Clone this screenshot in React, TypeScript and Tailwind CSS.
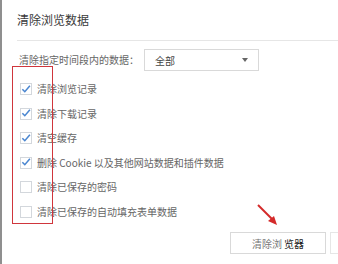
import React from "react";

const items = [
  { label: "清除浏览记录", checked: true },
  { label: "清除下载记录", checked: true },
  { label: "清空缓存", checked: true },
  { label: "删除 Cookie 以及其他网站数据和插件数据", checked: true },
  { label: "清除已保存的密码", checked: false },
  { label: "清除已保存的自动填充表单数据", checked: false },
];

function Box({ checked }: { checked: boolean }) {
  return (
    <div className="w-[12px] h-[12px] border border-[#d3d7dc] bg-white flex items-center justify-center shrink-0">
      {checked && (
        <svg width="11" height="10" viewBox="0 0 11 10" className="-mt-[1px]">
          <path d="M1.5 5.2 L4.2 8 L9.8 1.5" fill="none" stroke="#4a86d0" strokeWidth="1.7" />
        </svg>
      )}
    </div>
  );
}

export default function App() {
  return (
    <div
      className="relative w-[338px] h-[264px] bg-white overflow-hidden border-l-2 border-[#8f8f8f] text-[#666]"
      style={{ fontFamily: '"Noto Sans CJK SC", "Noto Sans", sans-serif' }}
    >
      <div className="pl-[15px] pt-[12px]">
        <p className="text-[12px] leading-[16px] text-[#3a3a3a]">清除浏览数据</p>
        <div className="mt-[12px] border-b border-[#e6e6e6]" />
        <div className="flex items-center mt-[8px] pl-[2px]">
          <span className="text-[10px] leading-[14px] w-[125px]">清除指定时间段内的数据：</span>
          <div className="w-[115px] h-[22px] border border-[#d9d9d9] flex items-center justify-between pl-[10px] pr-[10px]">
            <span className="text-[10px] text-[#444]">全部</span>
            <svg width="6" height="4" viewBox="0 0 6 4">
              <path d="M0 0 H6 L3 4 Z" fill="#666" />
            </svg>
          </div>
        </div>
        <div className="flex flex-col mt-[6px] pl-[3px]">
          {items.map((it) => (
            <div key={it.label} className="h-[24.5px] flex items-center gap-[5px]">
              <Box checked={it.checked} />
              <span className="text-[10px] leading-[14px] whitespace-nowrap">{it.label}</span>
            </div>
          ))}
        </div>
        <div className="flex justify-end gap-[4px] mt-[8px] -mr-[12px]">
          <div className="w-[96px] h-[22px] border border-[#d9d9d9] flex items-center justify-center text-[10px] text-[#777]">
            清除浏<span className="text-[#222] ml-[2px]">览器</span>
          </div>
          <div className="w-[20px] h-[22px] border border-[#e6e6e6]" />
        </div>
      </div>

      <div className="absolute left-[10px] top-[66px] w-[41px] h-[158px] border border-[#d0363d]" />
      <svg className="absolute left-[252px] top-[202px]" width="28" height="26" viewBox="0 0 28 26">
        <path d="M4 3 L20 19" stroke="#d42a2a" strokeWidth="2" />
        <path d="M23 23 L14 19 L20 14 Z" fill="#d42a2a" />
      </svg>
    </div>
  );
}
